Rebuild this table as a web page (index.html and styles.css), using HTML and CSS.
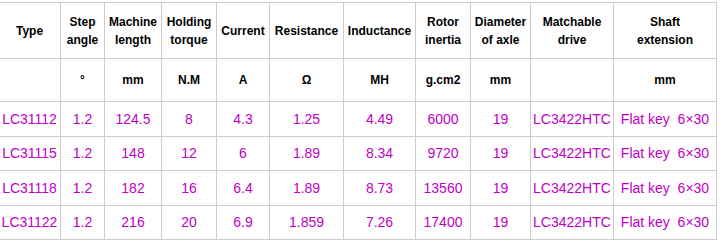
FILE: index.html
```html
<!DOCTYPE html>
<html>
<head>
<meta charset="utf-8">
<link rel="stylesheet" href="styles.css">
</head>
<body>
<table class="spec">
  <colgroup>
    <col class="c1"><col class="c2"><col class="c3"><col class="c4"><col class="c5"><col class="c6"><col class="c7"><col class="c8"><col class="c9"><col class="c10"><col class="c11">
  </colgroup>
  <thead>
    <tr class="h1">
      <th>Type</th>
      <th>Step<br>angle</th>
      <th>Machine<br>length</th>
      <th>Holding<br>torque</th>
      <th>Current</th>
      <th>Resistance</th>
      <th>Inductance</th>
      <th>Rotor<br>inertia</th>
      <th>Diameter<br>of axle</th>
      <th>Matchable<br>drive</th>
      <th>Shaft<br>extension</th>
    </tr>
    <tr class="h2">
      <th></th>
      <th>°</th>
      <th>mm</th>
      <th>N.M</th>
      <th>A</th>
      <th>Ω</th>
      <th>MH</th>
      <th>g.cm2</th>
      <th>mm</th>
      <th></th>
      <th>mm</th>
    </tr>
  </thead>
  <tbody>
    <tr>
      <td>LC31112</td><td>1.2</td><td>124.5</td><td>8</td><td>4.3</td><td>1.25</td><td>4.49</td><td>6000</td><td>19</td><td>LC3422HTC</td><td>Flat key&nbsp; 6×30</td>
    </tr>
    <tr>
      <td>LC31115</td><td>1.2</td><td>148</td><td>12</td><td>6</td><td>1.89</td><td>8.34</td><td>9720</td><td>19</td><td>LC3422HTC</td><td>Flat key&nbsp; 6×30</td>
    </tr>
    <tr>
      <td>LC31118</td><td>1.2</td><td>182</td><td>16</td><td>6.4</td><td>1.89</td><td>8.73</td><td>13560</td><td>19</td><td>LC3422HTC</td><td>Flat key&nbsp; 6×30</td>
    </tr>
    <tr>
      <td>LC31122</td><td>1.2</td><td>216</td><td>20</td><td>6.9</td><td>1.859</td><td>7.26</td><td>17400</td><td>19</td><td>LC3422HTC</td><td>Flat key&nbsp; 6×30</td>
    </tr>
  </tbody>
</table>
</body>
</html>
```
FILE: styles.css
```css
html, body {
  margin: 0;
  padding: 0;
  background: #ffffff;
}

body {
  font-family: "Liberation Sans", Arial, sans-serif;
}

.spec {
  border-collapse: collapse;
  table-layout: fixed;
  width: 719px;
  margin: 2px 0 0 -2px;
}

.spec th,
.spec td {
  border: 1px solid #cccccc;
  padding: 0;
  text-align: center;
  vertical-align: middle;
  white-space: nowrap;
}

.spec th {
  font-size: 12px;
  font-weight: bold;
  color: #000000;
  line-height: 18px;
}

.spec td {
  font-size: 14px;
  color: #c000c6;
  line-height: 16px;
  height: 33.5px;
}

.h1 th { height: 55px; }
.h2 th { height: 42px; }

.c1 { width: 62px; }
.c2 { width: 44px; }
.c3 { width: 57px; }
.c4 { width: 55px; }
.c5 { width: 53px; }
.c6 { width: 74px; }
.c7 { width: 72px; }
.c8 { width: 55px; }
.c9 { width: 60px; }
.c10 { width: 83px; }
.c11 { width: 103px; }
```
